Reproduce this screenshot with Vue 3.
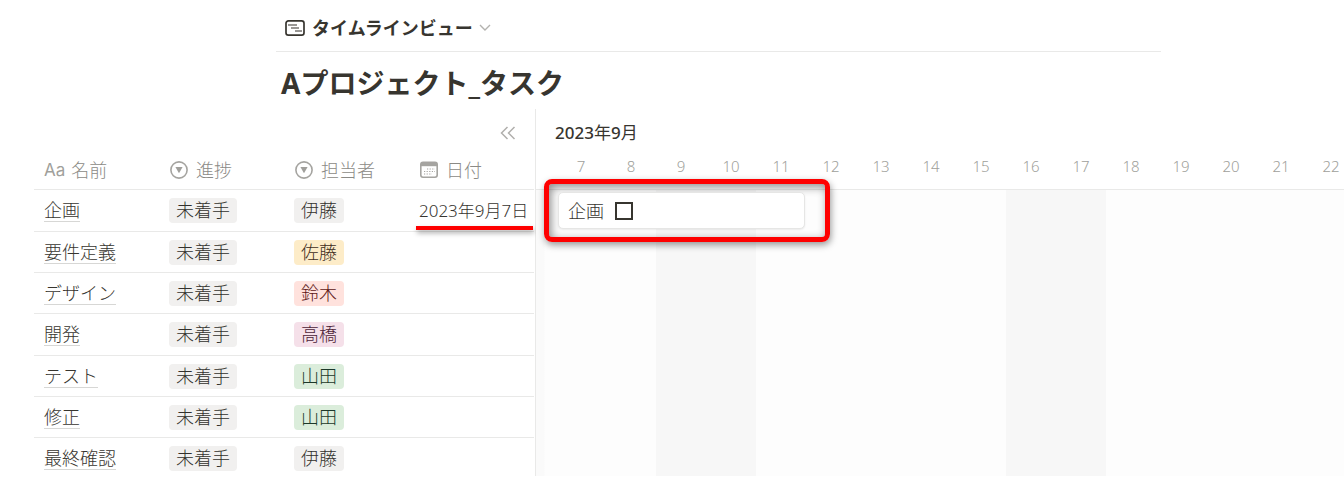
<template>
  <div class="page">
    <header class="view-bar">
      <button type="button" class="view-button">
        <svg class="view-icon" viewBox="0 0 20 18" fill="none">
          <rect x="1" y="1.8" width="18" height="14.4" rx="2.4" stroke="#37352f" stroke-width="1.7" />
          <path d="M3 6h9M6 9h8M10 12h7" stroke="#787671" stroke-width="1.5" />
        </svg>
        タイムラインビュー
        <svg class="chevron" viewBox="0 0 12 8" fill="none">
          <path d="M1 1l5 5 5-5" stroke="#b3b2af" stroke-width="1.4" />
        </svg>
      </button>
    </header>
    <h1>Aプロジェクト_タスク</h1>

    <main class="board">
      <section class="task-panel">
        <div class="panel-top">
          <button type="button" class="collapse" aria-label="閉じる">
            <svg viewBox="0 0 16 14" fill="none">
              <path d="M7.5 1l-6 6 6 6M14.5 1l-6 6 6 6" stroke="#b0afac" stroke-width="1.5" />
            </svg>
          </button>
        </div>
        <table>
          <thead>
            <tr>
              <th v-for="col in columns" :key="col.label">
                <div class="head">
                  <span v-if="col.icon === 'text'" class="aa">Aa</span>
                  <svg v-else-if="col.icon === 'select'" viewBox="0 0 18 18" fill="none">
                    <circle cx="9" cy="9" r="8.1" stroke="#a5a4a0" stroke-width="1.6" />
                    <path d="M5.4 6h7.2L9 12.2z" fill="#a09f9b" />
                  </svg>
                  <svg v-else viewBox="0 0 18 18" fill="none">
                    <rect x="0.8" y="1.3" width="16.4" height="15" rx="2.2" stroke="#a5a4a0" stroke-width="1.6" />
                    <path d="M1 1.4h16v3.8H1z" fill="#a5a4a0" />
                    <path
                      d="M7 8h8M4 10.5h11M4 13h8"
                      stroke="#a5a4a0"
                      stroke-width="1.2"
                      stroke-dasharray="1.2 1.4"
                    />
                  </svg>
                  {{ col.label }}
                </div>
              </th>
            </tr>
          </thead>
          <tbody>
            <tr v-for="task in tasks" :key="task.name">
              <td><a href="#" class="name">{{ task.name }}</a></td>
              <td><span class="tag gray">未着手</span></td>
              <td><span class="tag" :class="task.color">{{ task.owner }}</span></td>
              <td class="date">
                <template v-if="task.date">{{ task.date }}<i class="underline"></i></template>
              </td>
            </tr>
          </tbody>
        </table>
      </section>

      <section class="timeline">
        <div class="month"><b>2023</b>年<b>9</b>月</div>
        <div class="days">
          <span v-for="day in days" :key="day">{{ day }}</span>
        </div>
        <div class="grid">
          <div v-for="day in days" :key="day" class="day" :class="{ weekend: isWeekend(day) }"></div>
          <div class="marker"></div>
          <div class="bar">
            <label for="plan">企画</label>
            <input id="plan" type="checkbox" />
          </div>
        </div>
      </section>
    </main>
  </div>
</template>

<script setup>
const columns = [
  { label: '名前', icon: 'text' },
  { label: '進捗', icon: 'select' },
  { label: '担当者', icon: 'select' },
  { label: '日付', icon: 'date' },
];

const tasks = [
  { name: '企画', owner: '伊藤', color: 'gray', date: '2023年9月7日' },
  { name: '要件定義', owner: '佐藤', color: 'yellow' },
  { name: 'デザイン', owner: '鈴木', color: 'red' },
  { name: '開発', owner: '高橋', color: 'pink' },
  { name: 'テスト', owner: '山田', color: 'green' },
  { name: '修正', owner: '山田', color: 'green' },
  { name: '最終確認', owner: '伊藤', color: 'gray' },
];

const days = Array.from({ length: 16 }, (_, i) => i + 7);

const isWeekend = (day) => [0, 6].includes(new Date(2023, 8, day).getDay());
</script>

<style>
body {
  margin: 0;
  background: #fff;
}
</style>

<style scoped>
.page {
  overflow: hidden;
  color: #37352f;
  font-family: "Noto Sans", "Noto Sans CJK JP", sans-serif;
  font-size: 18px;
  font-weight: 300;
  line-height: 26px;
}

button {
  padding: 0;
  border: 0;
  background: none;
  color: inherit;
  font: inherit;
  cursor: pointer;
}

.view-bar {
  display: flex;
  align-items: center;
  height: 52px;
  margin: 0 183px 0 276px;
  padding: 4px 9px 0;
  box-sizing: border-box;
  border-bottom: 1px solid #e9e9e8;
}

.view-button {
  display: flex;
  align-items: center;
  font-weight: 700;
}

.view-icon {
  width: 20px;
  height: 18px;
  margin-right: 7px;
}

.chevron {
  width: 12px;
  height: 8px;
  margin-left: 6px;
}

h1 {
  margin: 11px 0 0 281px;
  font-size: 28px;
  font-weight: 700;
  line-height: 40px;
}

.board {
  display: flex;
  margin: 6px 0 0 34px;
}

.task-panel {
  flex: none;
  padding-right: 1px;
  border-right: 1px solid #e9e9e8;
}

.panel-top {
  display: flex;
  justify-content: flex-end;
  align-items: center;
  height: 42px;
  padding: 5px 18px 0 0;
  box-sizing: border-box;
}

.collapse {
  display: flex;
}

.collapse svg {
  width: 16px;
  height: 14px;
}

table {
  width: 500px;
  border-collapse: separate;
  border-spacing: 0;
  table-layout: fixed;
}

th {
  height: 39px;
  padding: 0 0 0 10px;
  box-sizing: border-box;
  border-bottom: 1px solid #e9e9e8;
  color: #8b8a86;
  font-weight: 300;
}

.head {
  display: flex;
  align-items: center;
  gap: 9px;
}

.head svg {
  width: 18px;
  height: 18px;
  margin: 0 -1px 0 1px;
}

.aa {
  margin-right: -3px;
  color: #a09f9b;
  font-family: Inter, sans-serif;
  font-size: 17px;
  font-weight: 400;
}

td {
  height: 41px;
  padding: 8px 0 0 10px;
  box-sizing: border-box;
  border-bottom: 1px solid #e9e9e8;
  line-height: 25px;
  vertical-align: top;
}

tr:nth-child(3n + 1) td {
  height: 42px;
}

tr:last-child td {
  height: 38px;
  border-bottom: 0;
}

.name {
  display: inline-block;
  border-bottom: 1px solid #d7d7d5;
  color: inherit;
  line-height: 21px;
  text-decoration: none;
}

.tag {
  display: inline-block;
  padding: 0 7px;
  border-radius: 4px;
  vertical-align: top;
}

.gray {
  background: #f1f0ef;
  color: #32302c;
}

.yellow {
  background: #fdecc8;
  color: #402c1b;
}

.red {
  background: #ffe2dd;
  color: #5d1715;
}

.pink {
  background: #f5e0e9;
  color: #4c2337;
}

.green {
  background: #dbeddb;
  color: #1c3829;
}

.date {
  position: relative;
  font-size: 17px;
  white-space: nowrap;
}

.underline {
  position: absolute;
  right: 1px;
  bottom: 1px;
  left: 7px;
  height: 4px;
  background: #fe0000;
  box-shadow: 1px 3px 5px rgba(0, 0, 0, 0.35);
}

.timeline {
  display: flex;
  flex: 1;
  flex-direction: column;
  min-width: 0;
}

.month {
  padding: 11px 0 0 19px;
  font-size: 17px;
  font-weight: 400;
}

.month b {
  font-weight: 500;
}

.days {
  display: flex;
  height: 43px;
  padding-left: 20px;
  border-bottom: 1px solid #e9e9e8;
  color: #a09f9b;
  font-size: 15px;
  line-height: 41px;
  text-align: center;
}

.days span {
  flex: none;
  width: 50px;
}

.grid {
  position: relative;
  display: flex;
  flex: 1;
  padding-left: 20px;
  background: linear-gradient(to right, #fafafa 8px, #fdfdfd 9px);
}

.day {
  flex: none;
  width: 50px;
}

.weekend {
  background: #f7f7f7;
}

.bar {
  position: absolute;
  top: 2px;
  left: 22px;
  display: flex;
  align-items: center;
  gap: 11px;
  width: 247px;
  height: 37px;
  padding: 0 9px;
  box-sizing: border-box;
  border: 1px solid #e6e6e5;
  border-radius: 5px;
  background: #fff;
  box-shadow: 0 1px 2px rgba(0, 0, 0, 0.08);
}

.bar input {
  width: 18px;
  height: 18px;
  margin: 0;
  border: 2px solid #37352f;
  appearance: none;
}

.marker {
  position: absolute;
  top: -11px;
  left: 8px;
  width: 286px;
  height: 63px;
  box-sizing: border-box;
  border: 5px solid #fe0000;
  border-radius: 8px;
  box-shadow: 1px 3px 7px rgba(0, 0, 0, 0.4), inset 2px 3px 10px rgba(0, 0, 0, 0.45);
}
</style>
